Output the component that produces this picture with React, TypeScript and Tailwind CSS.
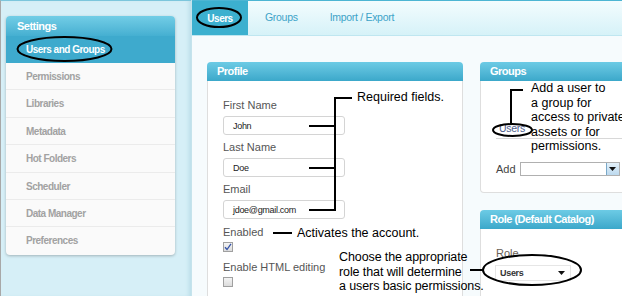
import React from 'react';

const arial = "font-['Liberation_Sans',Arial,sans-serif]";

const menuItems = ['Permissions', 'Libraries', 'Metadata', 'Hot Folders', 'Scheduler', 'Data Manager', 'Preferences'];

const PanelHeader: React.FC<{ title: string }> = ({ title }) => (
  <div className="h-[19px] rounded-t-[4px] bg-gradient-to-b from-[#6ccbe5] to-[#3ba8ca] pl-[10px] text-[11px] leading-[19px] font-bold tracking-[-0.5px] text-white">
    {title}
  </div>
);

const TextField: React.FC<{ value: string }> = ({ value }) => (
  <div className="mt-[3px] flex h-[19px] w-[122px] items-center rounded-[3px] border border-[#d4d4d4] bg-white pl-[9px] text-[9px] tracking-[-0.3px] text-[#222]">
    {value}
  </div>
);

const Checkbox: React.FC<{ checked?: boolean }> = ({ checked }) => (
  <div className="mt-[2px] flex h-[10px] w-[10px] items-center justify-center border border-[#a0a0a0] bg-gradient-to-b from-[#f4f4f4] to-[#dcdcdc]">
    {checked && (
      <svg width="8" height="8" viewBox="0 0 8 8">
        <path d="M1 4.2 L3 6.5 L7 0.8" fill="none" stroke="#3453a8" strokeWidth="1.3" />
      </svg>
    )}
  </div>
);

const Annotations: React.FC = () => (
  <div className="pointer-events-none absolute inset-0">
    <svg width="622" height="296" className="absolute left-0 top-0">
      <g fill="none" stroke="#000" strokeWidth="2">
        <ellipse cx="64.5" cy="49" rx="47" ry="12" />
        <ellipse cx="219" cy="17.5" rx="22" ry="9.5" />
        <ellipse cx="512.5" cy="130" rx="19.5" ry="6" />
        <ellipse cx="532" cy="270" rx="49" ry="15" />
        <path d="M352 98 H335 V210" />
        <path d="M309 126 H335 M309 168 H335 M309 210 H336" />
        <path d="M273 233 H292" />
        <path d="M470 270 H483" />
        <path d="M523 90 H511 V124" />
      </g>
    </svg>
    <div className="absolute left-[357px] top-[90px] text-[12.5px] leading-[15px] text-black">Required fields.</div>
    <div className="absolute left-[297px] top-[226px] text-[12.5px] leading-[15px] text-black">Activates the account.</div>
    <div className="absolute left-[339px] top-[250px] text-[12.5px] leading-[14.5px] tracking-[-0.1px] text-black">
      Choose the appropriate
      <br />
      role that will determine
      <br />
      a users basic permissions.
    </div>
    <div className="absolute left-[531px] top-[81px] text-[12.5px] leading-[14.5px] whitespace-nowrap text-black">
      Add a user to
      <br />
      a group for
      <br />
      access to private
      <br />
      assets or for
      <br />
      permissions.
    </div>
  </div>
);

export default function App() {
  return (
    <div className={`relative flex h-[296px] w-[622px] overflow-hidden bg-white ${arial}`}>
      {/* Settings sidebar */}
      <aside className="w-[191px] shrink-0 border-l border-t border-l-[#a8a8a8] border-t-[#7cc6dc] bg-[#d6eff7] pl-[5px] pt-[15px] shadow-[inset_-4px_0_4px_-2px_#b9dde8]">
        <div className="w-[169px] overflow-hidden rounded-[4px] bg-[#fafafa] shadow-[0_1px_3px_rgba(0,0,0,0.25)]">
          <div className="h-[20px] bg-gradient-to-b from-[#72cde6] to-[#45afd1] pl-[11px] text-[11px] leading-[20px] font-bold tracking-[-0.5px] text-white">
            Settings
          </div>
          <div className="h-[27px] bg-[#3eaacd] pl-[20px] text-[10px] leading-[27px] font-bold tracking-[-0.5px] text-white">
            Users and Groups
          </div>
          {menuItems.map((item, i) => (
            <div
              key={item}
              className={`h-[27.4px] pl-[20px] text-[10px] leading-[27px] font-bold tracking-[-0.5px] text-[#a2a2a2] ${
                i < menuItems.length - 1 ? 'border-b border-[#ebebeb]' : ''
              }`}
            >
              {item}
            </div>
          ))}
        </div>
      </aside>

      {/* Main area */}
      <main className="flex min-w-0 flex-1 flex-col border-l border-[#c5e3ec]">
        <nav className="flex h-[36px] shrink-0 items-stretch border-b border-t border-b-[#bfe6f0] border-t-[#4db5d3] bg-gradient-to-b from-[#f3fcfe] to-[#d6f2f8]">
          <div className="flex w-[56px] items-center justify-center bg-[#3cb0cf] text-[10px] font-bold tracking-[-0.5px] text-white">
            Users
          </div>
          <div className="ml-[17px] flex items-center text-[10.5px] tracking-[-0.3px] text-[#3da3c8]">Groups</div>
          <div className="ml-[32px] flex items-center text-[10.5px] tracking-[-0.3px] text-[#3da3c8]">Import / Export</div>
        </nav>

        <div className="flex flex-1 gap-[17px] bg-[#f6fbfd] pl-[15px] pt-[26px]">
          {/* Profile */}
          <section className="w-[256px] shrink-0">
            <PanelHeader title="Profile" />
            <div className="h-[240px] border-x border-[#dedede] bg-white pl-[15px] pt-[16px] text-[11px] leading-[16px] text-[#555]">
              <div>First Name</div>
              <TextField value="John" />
              <div className="mt-[4px]">Last Name</div>
              <TextField value="Doe" />
              <div className="mt-[4px]">Email</div>
              <TextField value="jdoe@gmail.com" />
              <div className="mt-[5px]">Enabled</div>
              <Checkbox checked />
              <div className="mt-[7px]">Enable HTML editing</div>
              <Checkbox />
            </div>
          </section>

          {/* Right column */}
          <div className="flex w-[160px] shrink-0 flex-col gap-[17px]">
            <section>
              <PanelHeader title="Groups" />
              <div className="rounded-b-[4px] border-x border-b border-[#dedede] bg-white pb-[14px] pl-[15px] pt-[40px] text-[11px] text-[#555]">
                <div className="border-b border-[#d8d8d8] pb-[3px] pl-[3px] text-[10.5px] leading-[14px] tracking-[-0.3px] text-[#4d5d8c]">
                  Users
                </div>
                <div className="mt-[22px] flex items-center gap-[4px]">
                  <span className="text-[11px] text-[#444]">Add</span>
                  <div className="flex h-[14px] w-[100px] items-stretch border border-[#b0b0b0] bg-white">
                    <div className="flex-1" />
                    <div className="flex w-[13px] items-center justify-center border-l border-[#7aa9c9] bg-gradient-to-b from-[#e4f1fa] to-[#bcd9ee]">
                      <svg width="7" height="4" viewBox="0 0 7 4">
                        <path d="M0 0 H7 L3.5 4 Z" fill="#111" />
                      </svg>
                    </div>
                  </div>
                </div>
              </div>
            </section>

            <section>
              <PanelHeader title="Role (Default Catalog)" />
              <div className="h-[80px] border-x border-[#dedede] bg-white pl-[15px] pt-[17px] text-[11px] leading-[14px] text-[#6a5f55]">
                <div>Role</div>
                <div className="mt-[6px] flex h-[14px] w-[74px] items-center justify-between bg-white pl-[4px] pr-[5px] text-[9px] font-bold tracking-[-0.3px] text-[#333] shadow-[0_0_0_1px_#e6e6e6]">
                  <span>Users</span>
                  <svg width="7" height="4" viewBox="0 0 7 4">
                    <path d="M0 0 H7 L3.5 4 Z" fill="#111" />
                  </svg>
                </div>
              </div>
            </section>
          </div>
        </div>
      </main>

      <Annotations />
    </div>
  );
}
